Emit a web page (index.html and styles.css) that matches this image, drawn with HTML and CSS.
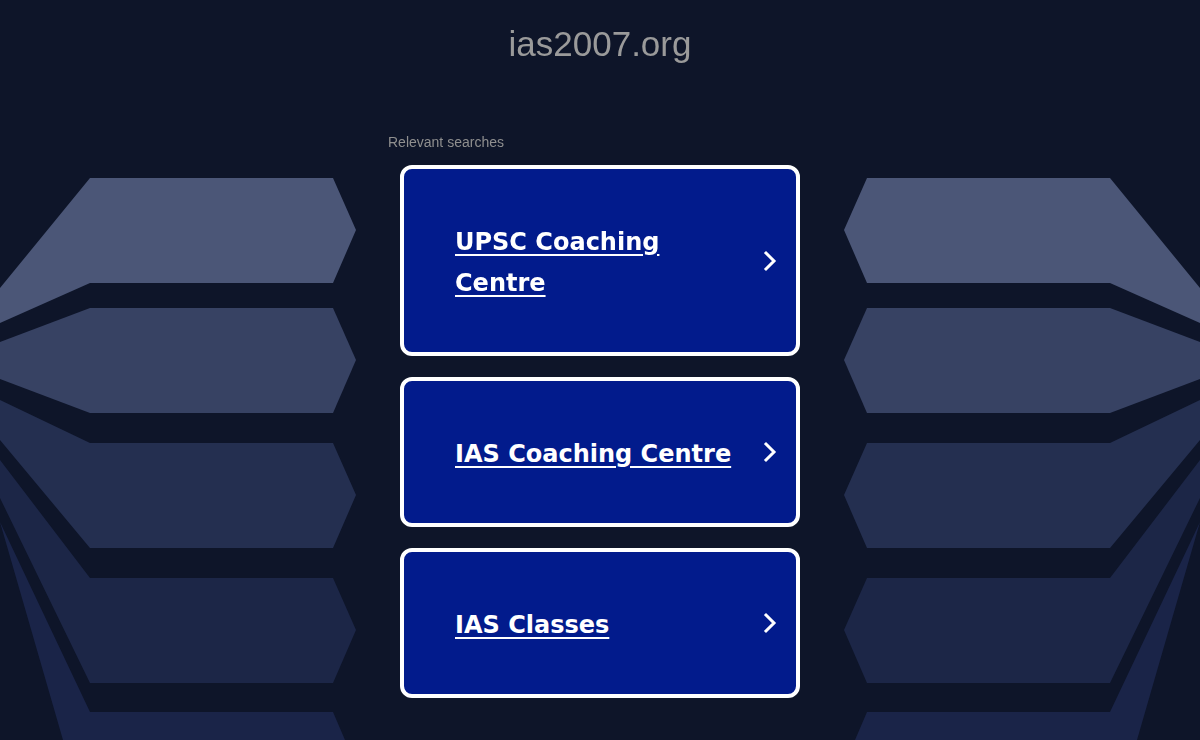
FILE: index.html
```html
<!DOCTYPE html>
<html lang="en">
<head>
<meta charset="utf-8">
<title>ias2007.org</title>
<link rel="stylesheet" href="styles.css">
</head>
<body>
<svg class="backdrop" width="1200" height="740" viewBox="0 0 1200 740" aria-hidden="true">
  <g id="wing">
    <polygon class="s1" points="90,178 333,178 356,230 333,283 90,283 0,323 0,288"/>
    <polygon class="s2" points="90,308 333,308 356,360 333,413 90,413 0,379 0,342"/>
    <polygon class="s3" points="90,443 333,443 356,495 333,548 90,548 0,440 0,400"/>
    <polygon class="s4" points="90,578 333,578 356,630 333,683 90,683 0,498 0,460"/>
    <polygon class="s5" points="90,712 333,712 345,740 63,740 0,522"/>
  </g>
  <use href="#wing" transform="translate(1200,0) scale(-1,1)"/>
</svg>
<main class="page">
  <h1 class="site-title">ias2007.org</h1>
  <section class="searches">
    <h2 class="searches-label">Relevant searches</h2>
    <ul class="search-list">
      <li class="search-card search-card--tall">
        <a class="search-link" href="#">UPSC Coaching Centre</a>
        <svg class="chevron" width="14" height="22" viewBox="0 0 14 22"><polyline points="3,3 11,11 3,19"/></svg>
      </li>
      <li class="search-card">
        <a class="search-link" href="#">IAS Coaching Centre</a>
        <svg class="chevron" width="14" height="22" viewBox="0 0 14 22"><polyline points="3,3 11,11 3,19"/></svg>
      </li>
      <li class="search-card">
        <a class="search-link" href="#">IAS Classes</a>
        <svg class="chevron" width="14" height="22" viewBox="0 0 14 22"><polyline points="3,3 11,11 3,19"/></svg>
      </li>
    </ul>
  </section>
</main>
</body>
</html>
```
FILE: styles.css
```css
html, body {
  margin: 0;
  padding: 0;
  height: 100%;
}
body {
  background: #0e1529;
  font-family: "Liberation Sans", Arial, sans-serif;
  overflow: hidden;
}
.backdrop {
  position: fixed;
  left: 0;
  top: 0;
  z-index: 0;
}
.s1 { fill: #4b5677; }
.s2 { fill: #374263; }
.s3 { fill: #242f50; }
.s4 { fill: #1c2647; }
.s5 { fill: #1a2448; }
.page {
  position: relative;
  z-index: 1;
  display: flex;
  flex-direction: column;
  align-items: center;
}
.site-title {
  margin: 0;
  padding-top: 24px;
  font-size: 35px;
  line-height: 40px;
  font-weight: normal;
  color: #9a9a9a;
}
.searches {
  width: 424px;
  margin-top: 69px;
}
.searches-label {
  margin: 0;
  font-size: 14px;
  line-height: 18px;
  font-weight: normal;
  color: #8f8f8f;
}
.search-list {
  list-style: none;
  margin: 14px 0 0;
  padding: 0 12px;
  display: flex;
  flex-direction: column;
  gap: 21px;
}
.search-card {
  box-sizing: border-box;
  display: flex;
  align-items: center;
  justify-content: space-between;
  height: 150px;
  padding: 0 19px 0 51px;
  background: #021b8c;
  border: 4px solid #ffffff;
  border-radius: 12px;
}
.search-card--tall {
  height: 191px;
}
.search-link {
  width: 290px;
  padding-top: 4px;
  font-family: "DejaVu Sans", Verdana, sans-serif;
  font-weight: bold;
  font-size: 24px;
  line-height: 41px;
  color: #ffffff;
  text-decoration: underline;
  text-decoration-thickness: 2px;
  text-underline-offset: 4px;
}
.chevron {
  flex: none;
  fill: none;
  stroke: #ffffff;
  stroke-width: 3;
  stroke-linecap: square;
}
```
